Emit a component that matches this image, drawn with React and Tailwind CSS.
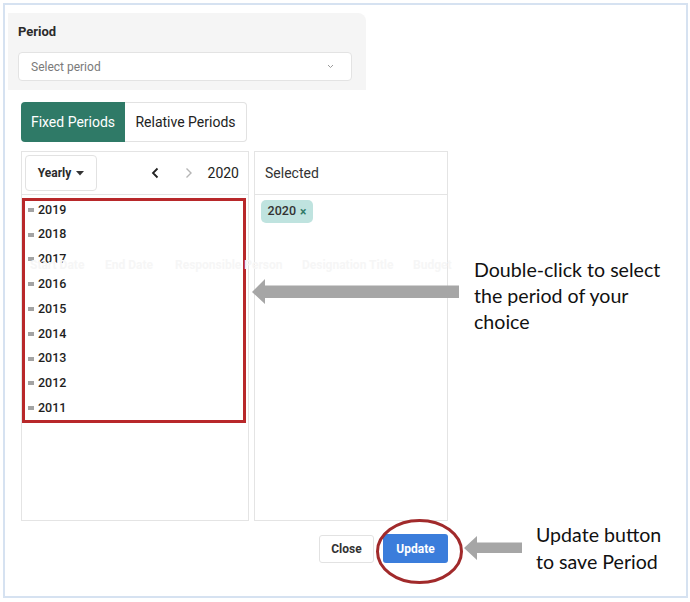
import React from "react";

const years = ["2019", "2018", "2017", "2016", "2015", "2014", "2013", "2012", "2011"];

export default function App() {
  return (
    <div className="w-[690px] h-[602px] bg-white relative overflow-hidden" style={{ fontFamily: "Roboto, 'Liberation Sans', sans-serif" }}>
      <div className="absolute left-[3px] top-[3px] w-[685px] h-[595px] border-2 border-[#d6e2f1]" />
      <div className="flex flex-col pt-[13px] pl-[8px]">
        {/* Period panel */}
        <div className="w-[358px] h-[77px] bg-[#f5f5f5] rounded-tr-[8px] pl-[10px] pt-[11px] flex flex-col">
          <div className="text-[13px] leading-[16px] font-bold text-[#2b2b2b]">Period</div>
          <div className="mt-[12px] w-[334px] h-[29px] bg-white border border-[#e3e3e3] rounded-[4px] flex items-center justify-between pl-[12px] pr-[17px]">
            <span className="text-[12px] text-[#7a7a7a]">Select period</span>
            <svg width="7" height="5" viewBox="0 0 7 5"><path d="M1 1l2.5 2.5L6 1" fill="none" stroke="#9a9a9a" strokeWidth="1" /></svg>
          </div>
        </div>

        {/* Tabs */}
        <div className="mt-[12px] ml-[13px] flex h-[40px]">
          <div className="w-[104px] h-full bg-[#2f7a67] rounded-l-[4px] flex items-center justify-center text-white text-[14px]">Fixed Periods</div>
          <div className="w-[122px] h-full bg-white border border-l-0 border-[#e2e2e2] rounded-r-[4px] flex items-center justify-center text-[#222] text-[14px]">Relative Periods</div>
        </div>

        {/* Panels */}
        <div className="mt-[9px] ml-[13px] flex gap-[5px]">
          <div className="relative w-[228px] h-[370px] border border-[#e4e4e4]">
            <div className="h-[43px] border-b border-[#e4e4e4] flex items-center pl-[3px] pr-[9px]">
              <div className="w-[72px] h-[36px] border border-[#e2e2e2] rounded-[4px] flex items-center justify-center gap-[5px]">
                <span className="text-[12px] font-bold text-[#2b2b2b]">Yearly</span>
                <svg width="8" height="5" viewBox="0 0 8 5"><path d="M0 0h8L4 4.5z" fill="#333" /></svg>
              </div>
              <svg className="ml-[54px]" width="8" height="12" viewBox="0 0 8 12"><path d="M6.5 1.5L2 6l4.5 4.5" fill="none" stroke="#222" strokeWidth="1.8" /></svg>
              <svg className="ml-[26px]" width="8" height="12" viewBox="0 0 8 12"><path d="M1.5 1.5L6 6l-4.5 4.5" fill="none" stroke="#b5b5b5" strokeWidth="1.4" /></svg>
              <span className="ml-auto text-[14px] text-[#222]">2020</span>
            </div>
            <div className="pt-[2.5px] pl-[6px] flex flex-col">
              {years.map((y) => (
                <div key={y} className="h-[24.8px] flex items-center gap-[4px]">
                  <span className="w-[6px] h-[4px] bg-[#a3a3a3]" />
                  <span className="text-[12.5px] font-medium text-[#1e1e1e]">{y}</span>
                </div>
              ))}
            </div>
            <div className="absolute left-0 top-[46px] w-[224px] h-[225px] border-[3px] border-[#b8282a]" />
          </div>
          <div className="w-[194px] h-[370px] border border-[#e4e4e4]">
            <div className="h-[43px] border-b border-[#e4e4e4] flex items-center pl-[10px]">
              <span className="text-[14px] text-[#333]">Selected</span>
            </div>
            <div className="pt-[5px] pl-[6px]">
              <div className="w-[52px] h-[23px] bg-[#bfe3df] rounded-[5px] flex items-center justify-center gap-[4px]">
                <span className="text-[12.5px] font-medium text-[#333]">2020</span>
                <span className="text-[12px] text-[#2f7a67] font-bold">×</span>
              </div>
            </div>
          </div>
        </div>

        {/* Buttons */}
        <div className="mt-[13px] ml-[311px] flex items-center gap-[9px]">
          <div className="w-[55px] h-[28px] border border-[#e2e2e2] rounded-[3px] flex items-center justify-center text-[12px] font-bold text-[#333]">Close</div>
          <div className="w-[65px] h-[29px] bg-[#3b7ddb] rounded-[3px] flex items-center justify-center text-[12px] font-bold text-white">Update</div>
        </div>
      </div>

      {/* faint ghost header */}
      <div className="absolute left-0 top-[256px] w-[460px] h-[16px] text-[12px] font-bold text-[#f6f6f6] pointer-events-none">
        <span className="absolute left-[30px]">Start Date</span>
        <span className="absolute left-[105px]">End Date</span>
        <span className="absolute left-[175px]">Responsible Person</span>
        <span className="absolute left-[302px]">Designation Title</span>
        <span className="absolute left-[413px]">Budget</span>
      </div>

      {/* annotations */}
      <svg className="absolute left-0 top-0 pointer-events-none" width="690" height="602">
        <polygon points="252,292 265,279 265,285.5 459,285.5 459,298 265,298 265,304" fill="#a6a6a6" />
        <polygon points="464,548 477,536 477,542.5 522,542.5 522,553 477,553 477,560" fill="#a6a6a6" />
        <ellipse cx="419.5" cy="551.5" rx="42" ry="31" fill="none" stroke="#a12a2b" strokeWidth="3" />
      </svg>
      <div className="absolute left-[474px] top-[257px] text-[19.6px] leading-[26px] text-[#111]" style={{ fontFamily: "Lato, 'Open Sans', sans-serif" }}>
        <div>Double-click to select</div>
        <div>the period of your</div>
        <div>choice</div>
      </div>
      <div className="absolute left-[536px] top-[521px] text-[19.6px] leading-[27px] text-[#111]" style={{ fontFamily: "Lato, 'Open Sans', sans-serif" }}>
        <div>Update button</div>
        <div>to save Period</div>
      </div>
    </div>
  );
}
